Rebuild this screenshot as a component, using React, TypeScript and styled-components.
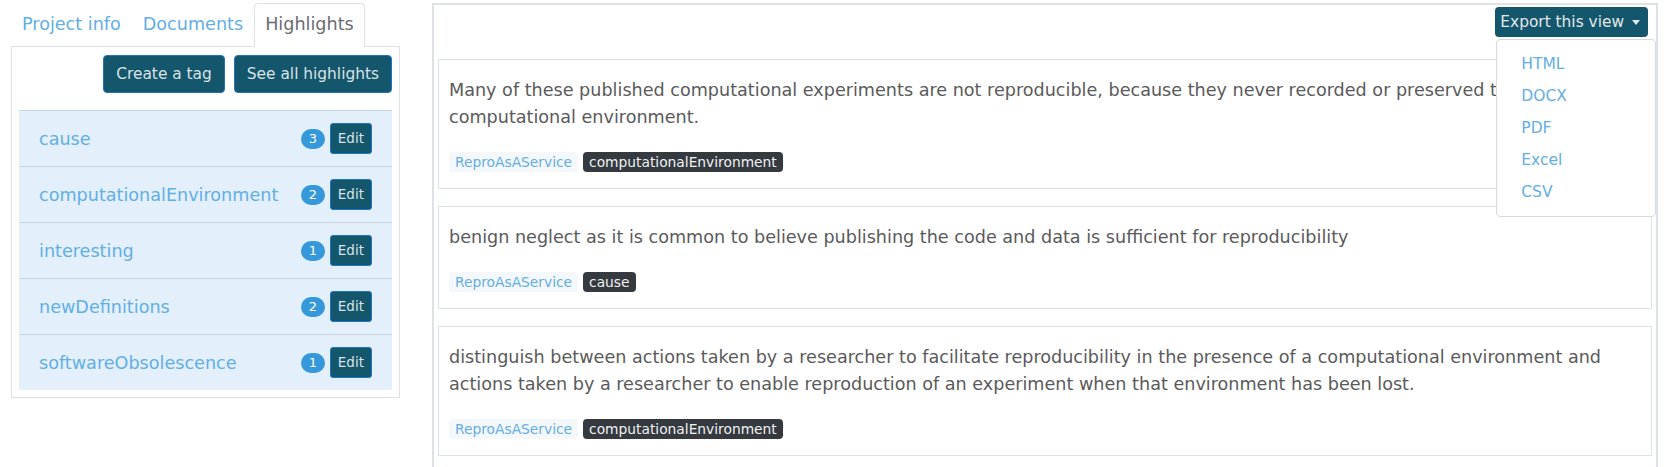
import React from "react";
import styled, { createGlobalStyle } from "styled-components";

const GlobalStyle = createGlobalStyle`
  body {
    margin: 0;
    background: #fff;
    font-family: "DejaVu Sans", "Liberation Sans", sans-serif;
    color: #5a5a5a;
  }
`;

const Page = styled.div`
  display: flex;
  align-items: flex-start;
  gap: 32px;
  padding: 3px 7px 0 11px;
  height: 464px;
  overflow: hidden;
`;

const LeftColumn = styled.div`
  width: 389px;
  flex-shrink: 0;
`;

const Tabs = styled.ul`
  display: flex;
  list-style: none;
  margin: 0;
  padding: 0;
  position: relative;
  z-index: 1;
`;

const Tab = styled.li<{ active?: boolean }>`
  padding: 7px 10px 8px;
  font-size: 17.6px;
  line-height: 27px;
  color: ${(p) => (p.active ? "#6c6c74" : "#62aee6")};
  background: ${(p) => (p.active ? "#fff" : "transparent")};
  border: 1px solid ${(p) => (p.active ? "#dee2e6" : "transparent")};
  border-bottom: none;
  border-radius: 4px 4px 0 0;
  margin-bottom: -1px;
  padding-bottom: ${(p) => (p.active ? "9px" : "8px")};
  cursor: pointer;
`;

const TabPanel = styled.div`
  border: 1px solid #dee2e6;
  padding: 8px 7px 7px;
`;

const ButtonBar = styled.div`
  display: flex;
  justify-content: flex-end;
  gap: 9px;
  margin-bottom: 17px;
`;

const DarkButton = styled.button<{ small?: boolean }>`
  background: #14566b;
  color: #d9e2e6;
  border: 1px solid #1f74c9;
  border-radius: ${(p) => (p.small ? "3px" : "4px")};
  font-family: inherit;
  font-size: ${(p) => (p.small ? "13.5px" : "15.4px")};
  line-height: ${(p) => (p.small ? "21px" : "24px")};
  padding: ${(p) => (p.small ? "4px 7px" : "6px 12px")};
  cursor: pointer;
`;

const TagList = styled.div`
  background: #e3f0fc;
`;

const TagRow = styled.div`
  display: flex;
  align-items: center;
  height: 56px;
  box-sizing: border-box;
  padding: 0 20px;
  border-top: 1px solid #c8d6e4;
`;

const TagName = styled.span`
  flex: 1;
  color: #62aee6;
  font-size: 17.6px;
`;

const CountBadge = styled.span`
  display: inline-flex;
  align-items: center;
  justify-content: center;
  width: 24px;
  height: 20px;
  border-radius: 10px;
  background: #3498db;
  color: #fff;
  font-size: 13px;
  margin-right: 5px;
`;

const RightPanel = styled.div`
  flex: 1;
  border: 2px solid #dee2e6;
  border-bottom: none;
  min-height: 480px;
  box-sizing: border-box;
`;

const Toolbar = styled.div`
  display: flex;
  justify-content: flex-end;
  padding: 2px 8px 0;
  position: relative;
`;

const ExportWrap = styled.div`
  position: relative;
`;

const ExportButton = styled.button`
  display: flex;
  align-items: center;
  gap: 8px;
  background: #14566b;
  color: #e2e8ea;
  border: none;
  border-radius: 4px;
  font-family: inherit;
  font-size: 15.4px;
  line-height: 24px;
  padding: 3px 8px 3px 5px;
  cursor: pointer;

  &::after {
    content: "";
    border-top: 5px solid #e2e8ea;
    border-left: 4px solid transparent;
    border-right: 4px solid transparent;
  }
`;

const Menu = styled.div`
  position: absolute;
  top: 32px;
  left: 1px;
  width: 158px;
  background: #fff;
  border: 1px solid #d6dadf;
  border-radius: 4px;
  padding: 8px 0;
  z-index: 5;
`;

const MenuItem = styled.div`
  padding: 4px 24px;
  font-size: 15.5px;
  line-height: 24px;
  color: #62aee6;
`;

const Highlights = styled.div`
  display: flex;
  flex-direction: column;
  gap: 17px;
  margin-top: 22px;
  padding: 0 4px;
`;

const Card = styled.div`
  border: 1px solid #dee2e6;
  padding: 17px 10px 16px;
`;

const Quote = styled.p`
  margin: 0 0 21px;
  font-size: 17.6px;
  line-height: 27px;
  color: #5a5a5a;
`;

const Chips = styled.div`
  display: flex;
  gap: 5px;
`;

const Chip = styled.span<{ dark?: boolean }>`
  display: inline-flex;
  align-items: center;
  height: 20px;
  padding: 0 6px;
  border-radius: 4px;
  font-size: 13.8px;
  background: ${(p) => (p.dark ? "#343a40" : "#f5f8fb")};
  color: ${(p) => (p.dark ? "#f1f1f1" : "#62aee6")};
`;

const tags = [
  { name: "cause", count: 3 },
  { name: "computationalEnvironment", count: 2 },
  { name: "interesting", count: 1 },
  { name: "newDefinitions", count: 2 },
  { name: "softwareObsolescence", count: 1 },
];

const highlights = [
  {
    text: "Many of these published computational experiments are not reproducible, because they never recorded or preserved the computational environment.",
    tag: "computationalEnvironment",
  },
  {
    text: "benign neglect as it is common to believe publishing the code and data is sufficient for reproducibility",
    tag: "cause",
  },
  {
    text: "distinguish between actions taken by a researcher to facilitate reproducibility in the presence of a computational environment and actions taken by a researcher to enable reproduction of an experiment when that environment has been lost.",
    tag: "computationalEnvironment",
  },
];

const formats = ["HTML", "DOCX", "PDF", "Excel", "CSV"];

export default function App() {
  return (
    <>
      <GlobalStyle />
      <Page>
        <LeftColumn>
          <Tabs>
            <Tab>Project info</Tab>
            <Tab>Documents</Tab>
            <Tab active>Highlights</Tab>
          </Tabs>
          <TabPanel>
            <ButtonBar>
              <DarkButton>Create a tag</DarkButton>
              <DarkButton>See all highlights</DarkButton>
            </ButtonBar>
            <TagList>
              {tags.map((t) => (
                <TagRow key={t.name}>
                  <TagName>{t.name}</TagName>
                  <CountBadge>{t.count}</CountBadge>
                  <DarkButton small>Edit</DarkButton>
                </TagRow>
              ))}
            </TagList>
          </TabPanel>
        </LeftColumn>

        <RightPanel>
          <Toolbar>
            <ExportWrap>
              <ExportButton>Export this view</ExportButton>
              <Menu>
                {formats.map((f) => (
                  <MenuItem key={f}>{f}</MenuItem>
                ))}
              </Menu>
            </ExportWrap>
          </Toolbar>
          <Highlights>
            {highlights.map((h, i) => (
              <Card key={i}>
                <Quote>{h.text}</Quote>
                <Chips>
                  <Chip>ReproAsAService</Chip>
                  <Chip dark>{h.tag}</Chip>
                </Chips>
              </Card>
            ))}
          </Highlights>
        </RightPanel>
      </Page>
    </>
  );
}
